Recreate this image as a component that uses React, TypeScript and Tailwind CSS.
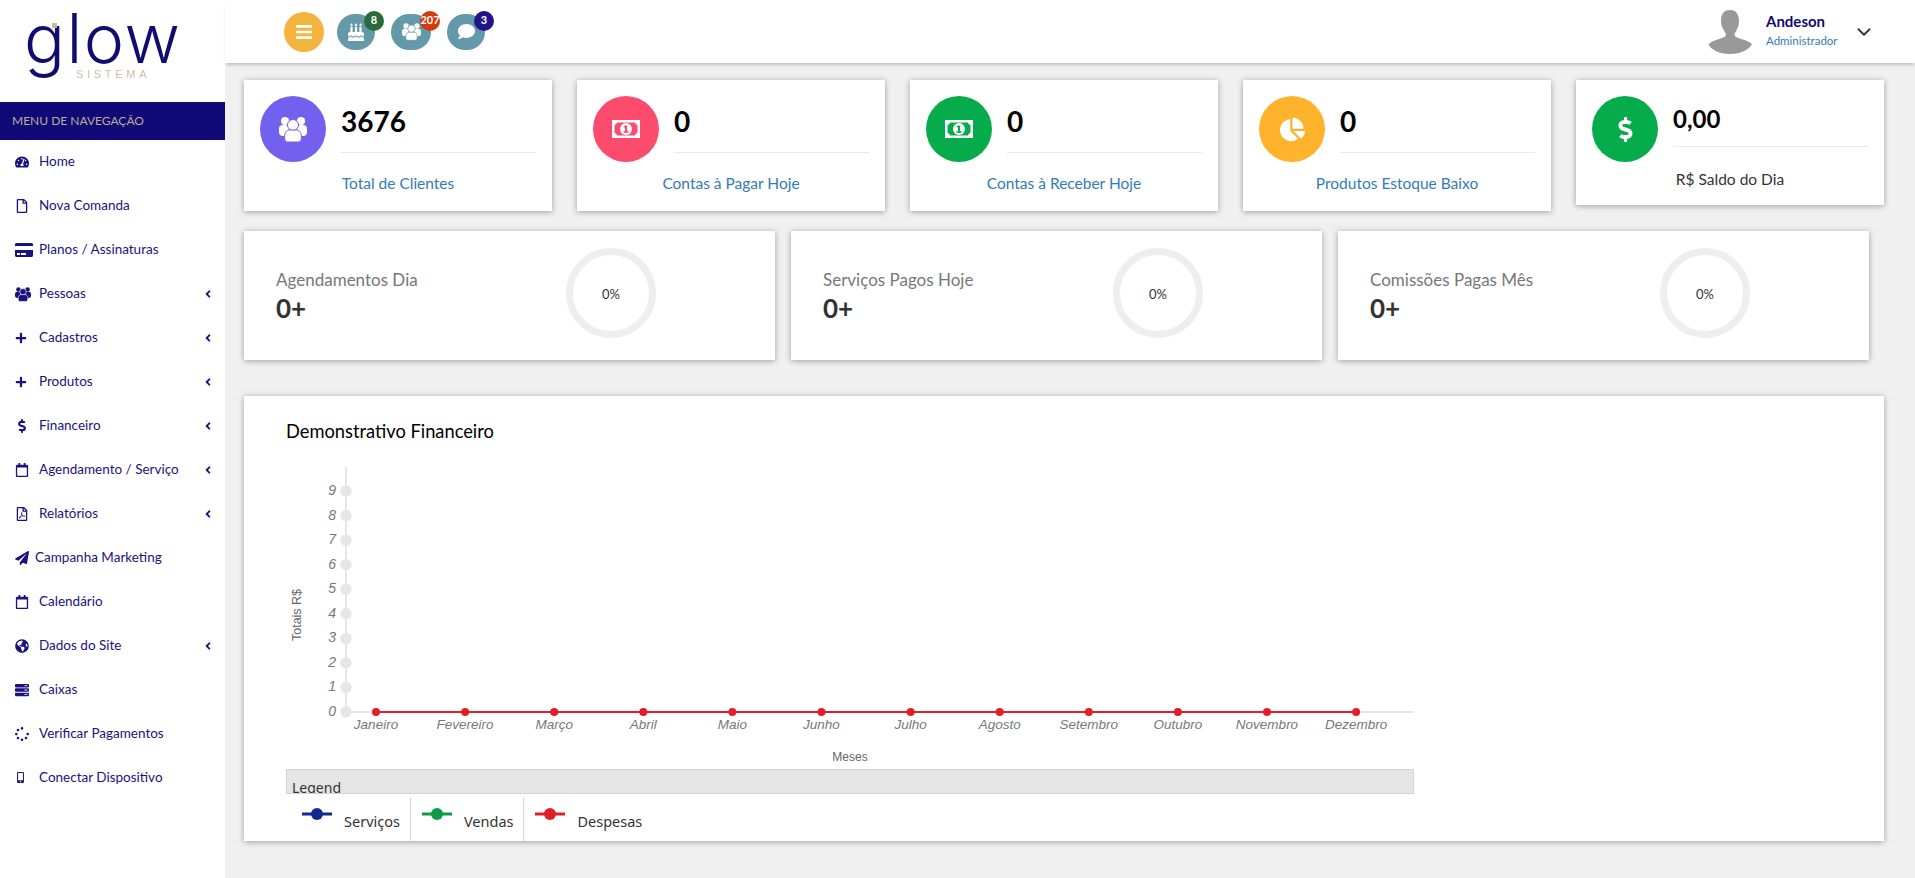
import type { ReactNode } from 'react';
import {
  FaAngleLeft,
  FaBars,
  FaBirthdayCake,
  FaChartPie,
  FaComment,
  FaCreditCard,
  FaDollarSign,
  FaGlobeAmericas,
  FaMobileAlt,
  FaPaperPlane,
  FaPlus,
  FaRegCalendar,
  FaRegFile,
  FaRegFilePdf,
  FaServer,
  FaSpinner,
  FaTachometerAlt,
} from 'react-icons/fa';
import { ChevronDown } from 'lucide-react';

// three people, the front one outlined in the colour behind it
const UsersIcon = ({ size, bg }: { size: number; bg: string }) => (
  <svg width={size} height={size} viewBox="0 0 28 26" fill="currentColor">
    <circle cx="6" cy="5" r="4" />
    <circle cx="22" cy="5" r="4" />
    <rect x="0" y="9" width="10" height="11" rx="4" />
    <rect x="18" y="9" width="10" height="11" rx="4" />
    <circle cx="14" cy="9" r="5.5" stroke={bg} strokeWidth="1" />
    <path d="M5.500 21c0-5 3-7 5-7h7c2 0 5 2 5 7 0 3-1 5-3 5H8.500c-2 0-3-2-3-5z" stroke={bg} strokeWidth="1" />
  </svg>
);

const navItems: { label: string; icon: ReactNode; arrow?: boolean; tight?: boolean }[] = [
  { label: 'Home', icon: <FaTachometerAlt size={14} /> },
  { label: 'Nova Comanda', icon: <FaRegFile size={14} /> },
  { label: 'Planos / Assinaturas', icon: <FaCreditCard size={18} /> },
  { label: 'Pessoas', icon: <UsersIcon size={16} bg="#fff" />, arrow: true },
  { label: 'Cadastros', icon: <FaPlus size={12} />, arrow: true },
  { label: 'Produtos', icon: <FaPlus size={12} />, arrow: true },
  { label: 'Financeiro', icon: <FaDollarSign size={14} />, arrow: true },
  { label: 'Agendamento / Serviço', icon: <FaRegCalendar size={14} />, arrow: true },
  { label: 'Relatórios', icon: <FaRegFilePdf size={14} />, arrow: true },
  { label: 'Campanha Marketing', icon: <FaPaperPlane size={14} />, tight: true },
  { label: 'Calendário', icon: <FaRegCalendar size={14} /> },
  { label: 'Dados do Site', icon: <FaGlobeAmericas size={14} />, arrow: true },
  { label: 'Caixas', icon: <FaServer size={14} /> },
  { label: 'Verificar Pagamentos', icon: <FaSpinner size={14} /> },
  { label: 'Conectar Dispositivo', icon: <FaMobileAlt size={11} /> },
];

const months = ['Janeiro', 'Fevereiro', 'Março', 'Abril', 'Maio', 'Junho', 'Julho', 'Agosto', 'Setembro', 'Outubro', 'Novembro', 'Dezembro'];

const MoneyIcon = ({ bg }: { bg: string }) => (
  <svg width="28" height="18" viewBox="0 0 28 18">
    <rect width="28" height="18" fill="#fff" />
    <path d="M5 2.500h18a3 3 0 0 0 2.500 2.500v8a3 3 0 0 0-2.500 2.500H5A3 3 0 0 0 2.500 13V5A3 3 0 0 0 5 2.500z" fill={bg} />
    <circle cx="14" cy="9" r="6" fill="#fff" />
    <rect x="13" y="5.500" width="2.200" height="7" fill={bg} />
    <rect x="11.500" y="11.300" width="5" height="1.500" fill={bg} />
    <rect x="11.800" y="6" width="2" height="1.400" fill={bg} />
  </svg>
);

const StatCard = ({ color, icon, value, label, small }: { color: string; icon: ReactNode; value: string; label: string; small?: boolean }) => (
  <div className={`bg-white p-4 shadow-[0_1px_6px_rgba(0,0,0,0.35)] ${small ? 'h-[125px]' : 'h-[131px]'}`}>
    <div className="flex gap-[15px]">
      <div className={`flex h-[66px] w-[66px] shrink-0 items-center justify-center rounded-full text-white ${color}`}>{icon}</div>
      <div className={`flex-1 border-b border-[#e9e9e9] ${small ? 'h-[51px] pt-[7px] text-[24px] leading-[32px]' : 'h-[57px] pt-[6px] text-[28px] leading-[38px]'} font-bold text-black`}>
        {value}
      </div>
    </div>
    {small ? (
      <p className="mt-[6px] text-center text-[15.500px] leading-[22px] text-[#333]">{label}</p>
    ) : (
      <p className="mt-[10px] text-center text-[15.500px] leading-[22px] text-[#337ab7]">{label}</p>
    )}
  </div>
);

const RingCard = ({ title }: { title: string }) => (
  <div className="flex h-[129px] items-center bg-white pl-[32px] pr-[119px] shadow-[0_1px_6px_rgba(0,0,0,0.35)]">
    <div className="flex-1">
      <p className="text-[17px] leading-[24px] text-[#777]">{title}</p>
      <p className="text-[26px] font-bold leading-[32px] text-[#333]">0+</p>
    </div>
    <div className="mb-[5px] flex h-[90px] w-[90px] items-center justify-center rounded-full border-[7px] border-[#eeeeee] pt-[4px] text-[13px] text-[#333]">0%</div>
  </div>
);

const FinanceChart = () => {
  const y0 = 252;
  const stepY = 24.55;
  const axisX = 60;
  const firstX = 90;
  const stepX = 89.1;
  return (
    <svg width="1128" height="309" viewBox="0 0 1128 309" className="block">
      <line x1={axisX} y1="7" x2={axisX} y2={y0} stroke="#e6e6e6" strokeWidth="2" />
      <line x1={axisX} y1={y0} x2="1128" y2={y0} stroke="#e6e6e6" strokeWidth="2" />
      {Array.from({ length: 10 }).map((_, i) => (
        <g key={i}>
          <circle cx={axisX} cy={y0 - i * stepY} r="5.7" fill="#e6e6e6" />
          <text x="50" y={y0 - i * stepY + 4} textAnchor="end" fontSize="14" fontStyle="italic" fontFamily="'Liberation Sans', sans-serif" fill="#777">
            {i}
          </text>
        </g>
      ))}
      <line x1={firstX} y1={y0} x2={firstX + 11 * stepX} y2={y0} stroke="#e21f26" strokeWidth="2" />
      {months.map((m, i) => (
        <g key={m}>
          <circle cx={firstX + i * stepX} cy={y0} r="4" fill="#e21f26" />
          <text x={firstX + i * stepX} y={y0 + 17} textAnchor="middle" fontSize="13.500" fontStyle="italic" fontFamily="'Liberation Sans', sans-serif" fill="#777">
            {m}
          </text>
        </g>
      ))}
      <text x="564" y="301" textAnchor="middle" fontSize="12" fontFamily="'Liberation Sans', sans-serif" fill="#666">
        Meses
      </text>
      <text x="15" y="155" textAnchor="middle" fontSize="12.500" fontFamily="'Liberation Sans', sans-serif" fill="#666" transform="rotate(-90 15 155)">
        Totais R$
      </text>
    </svg>
  );
};

const LegendItem = ({ color, label, first, border }: { color: string; label: string; first?: boolean; border?: boolean }) => (
  <div className={`flex h-[43px] items-start pr-[10px] ${first ? 'pl-[16px]' : 'pl-[11px]'} ${border ? 'border-r border-[#d4d4d4]' : ''}`}>
    <svg width="30" height="14" viewBox="0 0 30 14" className="mt-[9px]">
      <line x1="0" y1="7" x2="30" y2="7" stroke={color} strokeWidth="3" />
      <circle cx="15" cy="7" r="6" fill={color} />
    </svg>
    <span className="ml-3 mt-[13px] font-['Noto_Sans',sans-serif] text-[14.500px] leading-[20px] text-[#333]">{label}</span>
  </div>
);

export default function App() {
  return (
    <div className="flex h-screen overflow-hidden bg-[#f0f0f0] font-['Lato',sans-serif]">
      {/* Sidebar */}
      <aside className="w-[225px] shrink-0 bg-white">
        <div className="h-[102px]">
          <svg width="225" height="102" viewBox="0 0 225 102">
            <text x="24" y="63" fontSize="68" fontWeight="300" fontFamily="Inter, sans-serif" fill="#130c70" letterSpacing="1.500">
              glow
            </text>
            <rect x="52" y="23" width="5" height="5" fill="#c9b89a" />
            <text x="76" y="78" fontSize="11" fontFamily="'Liberation Sans', sans-serif" fill="#cdbf9f" letterSpacing="3.700">
              SISTEMA
            </text>
          </svg>
        </div>
        <div className="flex h-[38px] items-center bg-[#0f0a78] pl-3 text-[12px] text-[#bcae90]">MENU DE NAVEGAÇÃO</div>
        <nav>
          {navItems.map((item) => (
            <a key={item.label} className="flex h-[44px] items-center pb-[1px] pl-[15px] pr-[11px] text-[13.500px] text-[#1b1280]">
              <span className={`flex shrink-0 items-center ${item.tight ? 'w-[20px]' : 'w-[24px]'}`}>{item.icon}</span>
              <span className="flex-1">{item.label}</span>
              {item.arrow && <FaAngleLeft size={12} />}
            </a>
          ))}
        </nav>
      </aside>

      <div className="flex min-w-0 flex-1 flex-col">
        {/* Topbar */}
        <header className="flex h-[63px] shrink-0 items-center bg-white pl-[59px] shadow-[0_3px_3px_-1px_rgba(0,0,0,0.2)]">
          <div className="flex h-[40px] w-[40px] items-center justify-center rounded-full bg-[#f4b53f] text-white">
            <FaBars size={18} />
          </div>
          <div className="relative ml-[13px] flex h-[36px] w-[38px] items-center justify-center rounded-full bg-[#6399a8] text-white">
            <FaBirthdayCake size={18} />
            <span className="absolute -right-[9px] -top-[3px] flex h-[20px] w-[20px] items-center justify-center rounded-full bg-[#2b6a3a] text-[11px] font-bold">8</span>
          </div>
          <div className="relative ml-[16px] flex h-[36px] w-[40px] items-center justify-center rounded-full bg-[#6399a8] text-white">
            <UsersIcon size={19} bg="#6399a8" />
            <span className="absolute -right-[9px] -top-[3px] flex h-[20px] w-[20px] items-center justify-center rounded-full bg-[#d13b0e] text-[11px] font-bold">207</span>
          </div>
          <div className="relative ml-[16px] flex h-[36px] w-[38px] items-center justify-center rounded-full bg-[#6399a8] text-white">
            <FaComment size={17} />
            <span className="absolute -right-[9px] -top-[3px] flex h-[20px] w-[20px] items-center justify-center rounded-full bg-[#1f1488] text-[11px] font-bold">3</span>
          </div>
          <div className="ml-auto flex items-center pr-[40px]">
            <svg width="44" height="44" viewBox="0 0 44 44">
              <path d="M13 11c0-8 4-11 9-11s9 3 9 11c0 3-.500 5-1.500 7-.500 2-2 4-3 6 0 2 1 3 4 4 5 1.500 10 3 13.500 6-2 5-11 10-22 10S2 39 .500 34C4 31 9 29.500 14 28c3-1 4-2 4-4-1-2-2.500-4-3.500-6-1-2-1.500-4-1.500-7z" fill="#999" />
            </svg>
            <div className="ml-[14px] w-[82px] pb-[4px]">
              <p className="text-[15px] font-bold leading-[20px] text-[#0f0a78]">Andeson</p>
              <p className="mt-[2px] text-[11.500px] leading-[16px] text-[#337ab7]">Administrador</p>
            </div>
            <ChevronDown size={22} className="ml-[5px] text-[#333]" />
          </div>
        </header>

        <main className="pl-[19px] pr-[31px] pt-[17px]">
          <div className="grid grid-cols-5 items-start gap-[25px]">
            <StatCard color="bg-[#7460ee]" icon={<UsersIcon size={28} bg="#7460ee" />} value="3676" label="Total de Clientes" />
            <StatCard color="bg-[#fc4b6c]" icon={<MoneyIcon bg="#fc4b6c" />} value="0" label="Contas à Pagar Hoje" />
            <StatCard color="bg-[#06ac4b]" icon={<MoneyIcon bg="#06ac4b" />} value="0" label="Contas à Receber Hoje" />
            <StatCard color="bg-[#ffb22b]" icon={<FaChartPie size={25} />} value="0" label="Produtos Estoque Baixo" />
            <StatCard small color="bg-[#06ac4b]" icon={<FaDollarSign size={25} />} value="0,00" label="R$ Saldo do Dia" />
          </div>

          <div className="mt-[20px] grid grid-cols-3 gap-[16px] pr-[15px]">
            <RingCard title="Agendamentos Dia" />
            <RingCard title="Serviços Pagos Hoje" />
            <RingCard title="Comissões Pagas Mês" />
          </div>

          <section className="mt-[36px] h-[445px] bg-white pl-[42px] pt-[24px] shadow-[0_1px_6px_rgba(0,0,0,0.35)]">
            <h2 className="mb-[18px] text-[18.300px] leading-[22px] text-black">Demonstrativo Financeiro</h2>
            <div className="w-[1128px]">
              <FinanceChart />
              <div className="h-[25px] overflow-hidden border border-[#d4d4d4] bg-[#e5e5e5] pl-[5px] pt-[8px] font-['Noto_Sans',sans-serif] text-[14px] leading-[20px] text-[#333]">
                Legend
              </div>
              <div className="mt-[4px] flex">
                <LegendItem first color="#0f2a8c" label="Serviços" border />
                <LegendItem color="#0f9a4a" label="Vendas" border />
                <LegendItem color="#e21f26" label="Despesas" />
              </div>
            </div>
          </section>
        </main>
      </div>
    </div>
  );
}
